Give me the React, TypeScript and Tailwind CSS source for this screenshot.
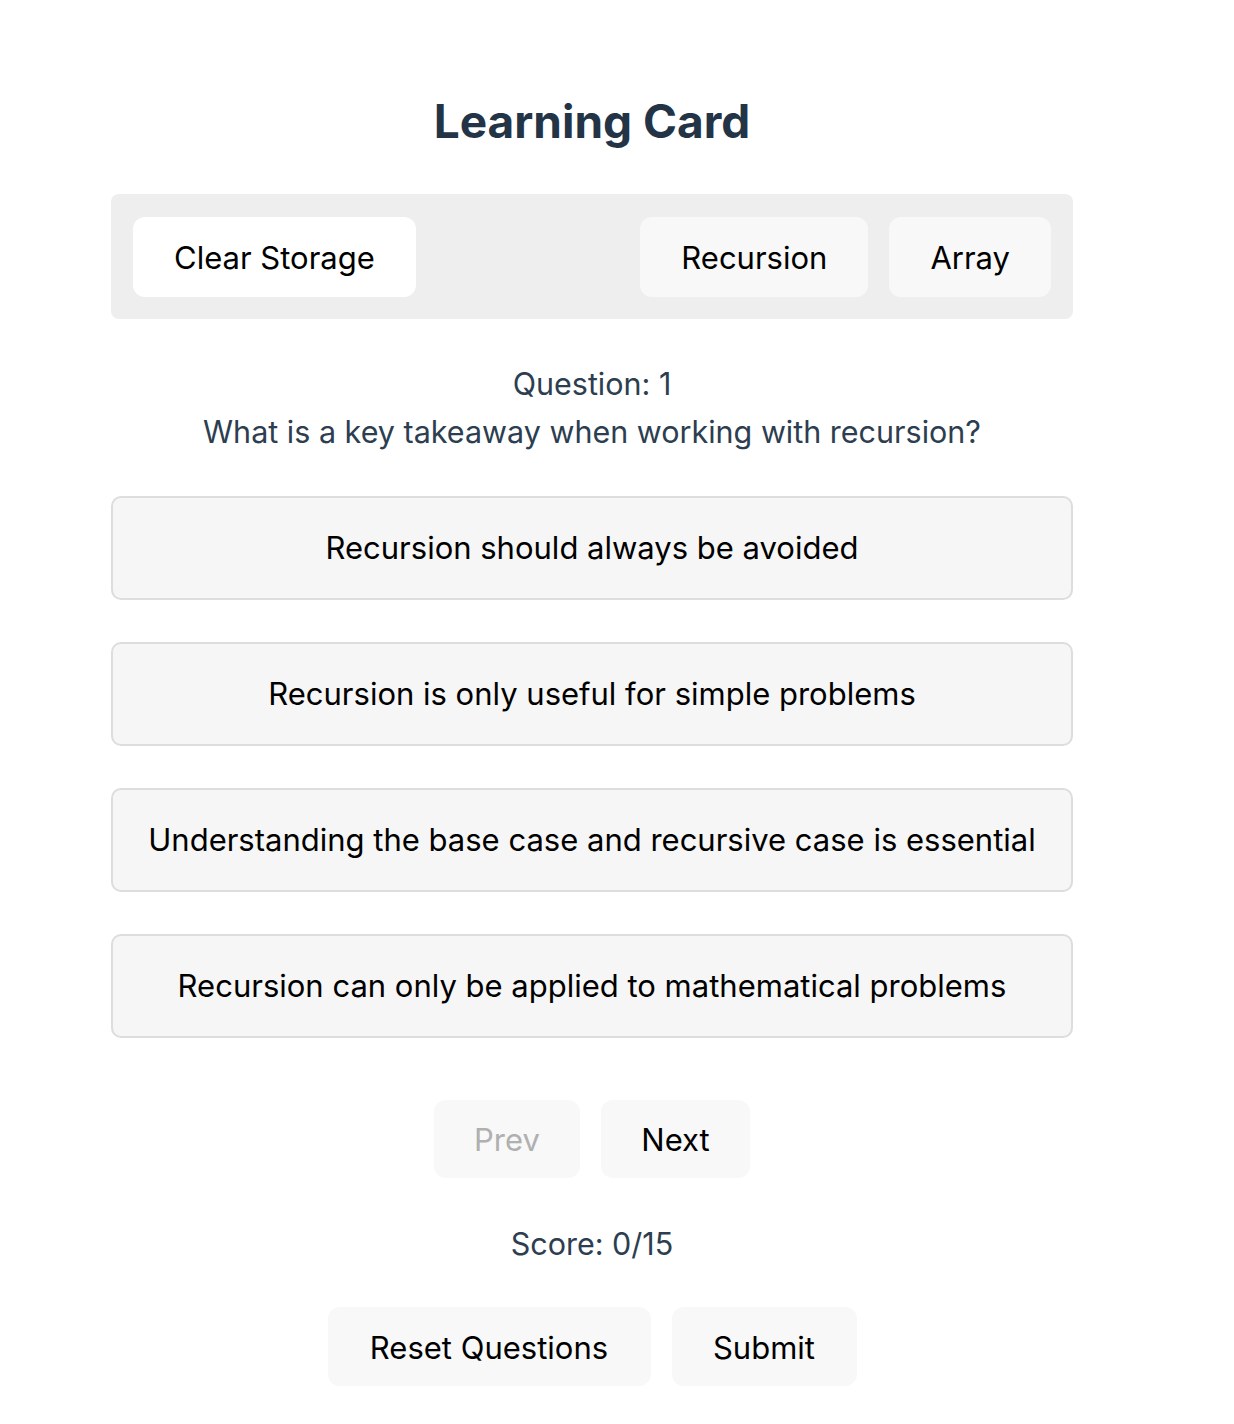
import React from "react";

const options = [
  "Recursion should always be avoided",
  "Recursion is only useful for simple problems",
  "Understanding the base case and recursive case is essential",
  "Recursion can only be applied to mathematical problems",
];

const topBtn =
  "h-[80px] px-[41px] pt-[3px] rounded-[12px] text-[31px] text-black flex items-center justify-center";

const App = () => {
  return (
    <div className="min-h-screen bg-white font-['Inter',sans-serif]">
      <div className="ml-[111px] w-[962px] flex flex-col items-center pt-[92px] pb-[38px]">
        <h1 className="text-[46px] leading-[58px] font-bold text-[#243447]">
          Learning Card
        </h1>

        <div className="mt-[44px] w-full h-[125px] bg-[#eeeeee] rounded-[8px] px-[22px] flex items-center">
          <button className={`${topBtn} bg-white`}>Clear Storage</button>
          <div className="ml-auto flex gap-[21px]">
            <button className={`${topBtn} bg-[#f8f8f8]`}>Recursion</button>
            <button className={`${topBtn} bg-[#f8f8f8]`}>Array</button>
          </div>
        </div>

        <div className="mt-[41px] text-center text-[30.5px] leading-[48px] text-[#2c3e50]">
          <p>Question: 1</p>
          <p>What is a key takeaway when working with recursion?</p>
        </div>

        <div className="mt-[40px] w-full flex flex-col gap-[42px]">
          {options.map((o) => (
            <button
              key={o}
              className="h-[104px] w-full rounded-[10px] border-2 border-[#dddddd] bg-[#f6f6f6] text-[31px] text-black flex items-center justify-center"
            >
              {o}
            </button>
          ))}
        </div>

        <div className="mt-[62px] flex gap-[21px]">
          <button className="h-[78px] w-[146px] pt-[2px] rounded-[12px] bg-[#f8f8f8] text-[31px] text-[#b0b0b0]">
            Prev
          </button>
          <button className="h-[78px] w-[149px] pt-[2px] rounded-[12px] bg-[#f8f8f8] text-[31px] text-black">
            Next
          </button>
        </div>

        <p className="mt-[42px] text-[30.5px] leading-[48px] text-[#2c3e50]">Score: 0/15</p>

        <div className="mt-[39px] flex gap-[21px]">
          <button className="h-[79px] w-[323px] pt-[3px] rounded-[12px] bg-[#f8f8f8] text-[31px] text-black">
            Reset Questions
          </button>
          <button className="h-[79px] w-[185px] pt-[3px] rounded-[12px] bg-[#f8f8f8] text-[31px] text-black">
            Submit
          </button>
        </div>
      </div>
    </div>
  );
};

export default App;
